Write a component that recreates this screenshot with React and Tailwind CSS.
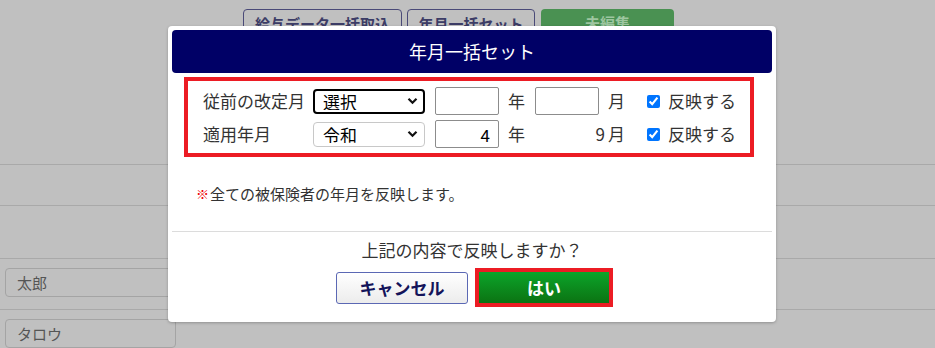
import { useState } from 'react'

function Chevron() {
    return (
        <svg
            className="pointer-events-none absolute right-[7px] top-1/2 -translate-y-1/2"
            width="11"
            height="8"
            viewBox="0 0 11 8"
        >
            <path d="M1.5 1.8 L5.5 5.8 L9.5 1.8" fill="none" stroke="#111" strokeWidth="2.2" />
        </svg>
    )
}

function EraSelect({ value, options, focused }) {
    return (
        <div className="relative w-[112px] h-[25px]">
            <select
                defaultValue={value}
                className={
                    focused
                        ? 'appearance-none w-full h-full pl-[8px] text-[17px] leading-none text-black bg-white border-2 border-black rounded-[4px] outline-none'
                        : 'appearance-none w-full h-full pl-[9px] text-[17px] leading-none text-black bg-white border border-[#c8c8c8] rounded-[4px] outline-none'
                }
            >
                {options.map((o) => (
                    <option key={o}>{o}</option>
                ))}
            </select>
            <Chevron />
        </div>
    )
}

function Row({ label, era, eraOptions, focused, year, monthCell, checked }) {
    const [on, setOn] = useState(checked)
    return (
        <div className="flex items-center h-[28px]">
            <span className="w-[110px] text-[17px] text-[#333]">{label}</span>
            <EraSelect value={era} options={eraOptions} focused={focused} />
            <input
                defaultValue={year}
                className="ml-[10px] w-[64px] h-[28px] border border-[#8c8c8c] rounded-[2px] text-right pr-[8px] text-[17px] text-black outline-none"
            />
            <span className="ml-[9px] w-[27px] text-[17px] text-[#333]">年</span>
            <div className="w-[90px] flex items-center justify-between text-[17px] text-[#333]">{monthCell}</div>
            <input
                type="checkbox"
                checked={on}
                onChange={() => setOn(!on)}
                className="ml-[22px] w-[13px] h-[13px] accent-[#0075ff]"
            />
            <span className="ml-[8px] text-[17px] text-[#333]">反映する</span>
        </div>
    )
}

export default function App() {
    return (
        <div className="relative w-[935px] h-[348px] overflow-hidden bg-[#c0c0c0] font-['Noto_Sans_CJK_JP',sans-serif]">
            {/* 背景のページ（オーバーレイで暗くなっている） */}
            <div className="h-[165px] border-b border-[#a9a9a9] flex gap-[5px] pl-[243px] pt-[9px]">
                <div className="w-[159px] h-[30px] border border-[#4a4a78] rounded-[4px] flex justify-center pt-[3px] text-[15px] font-bold text-[#3c3c66]">
                    給与データ一括取込
                </div>
                <div className="w-[128px] h-[30px] border border-[#4a4a78] rounded-[4px] flex justify-center pt-[3px] text-[15px] font-bold text-[#3c3c66]">
                    年月一括セット
                </div>
                <div className="ml-[1px] w-[133px] h-[30px] bg-[#4a9152] rounded-[4px] flex justify-center pt-[3px] text-[15px] font-bold text-[#9ec6a0]">
                    未編集
                </div>
            </div>
            <div className="h-[41px] border-b border-[#a9a9a9]" />
            <div className="h-[53px] border-b border-[#a9a9a9]" />
            <div className="h-[51px] border-b border-[#a9a9a9] pl-[5px] pt-[9px]">
                <div className="w-[171px] h-[29px] border border-[#a4a4a4] rounded-[4px] pl-[11px] text-[15px] leading-[27px] text-[#555]">
                    太郎
                </div>
            </div>
            <div className="pl-[5px] pt-[9px]">
                <div className="w-[171px] h-[29px] border border-[#a4a4a4] rounded-[4px] pl-[11px] text-[15px] leading-[27px] text-[#555]">
                    タロウ
                </div>
            </div>

            {/* ダイアログ */}
            <div className="absolute left-[168px] top-[26px] w-[608px] h-[296px] bg-white rounded-[4px] shadow-[0_1px_3px_rgba(0,0,0,0.25)] p-[4px] flex flex-col">
                <div className="h-[43px] bg-[#000066] rounded-[4px] flex items-center justify-center text-white text-[18px]">
                    年月一括セット
                </div>
                <div className="mt-[4px] ml-[12px] w-[570px] h-[80px] border-4 border-[#ec1c24] pl-[15px] pt-[6px] flex flex-col gap-[5px]">
                    <Row
                        label="従前の改定月"
                        era="選択"
                        eraOptions={['選択', '令和', '平成']}
                        focused
                        year=""
                        checked
                        monthCell={
                            <>
                                <input className="w-[64px] h-[28px] border border-[#8c8c8c] rounded-[2px] outline-none" />
                                <span>月</span>
                            </>
                        }
                    />
                    <Row
                        label="適用年月"
                        era="令和"
                        eraOptions={['令和', '平成']}
                        year="4"
                        checked
                        monthCell={
                            <span className="ml-auto">
                                9<span className="ml-[3px]">月</span>
                            </span>
                        }
                    />
                </div>
                <div className="mt-[26px] ml-[24px] h-[22px] flex items-center text-[15px] text-[#333]">
                    <span className="text-[#ee0000] text-[13px] font-bold mr-[1px]">※</span>
                    全ての被保険者の年月を反映します。
                </div>
                <div className="mt-[26px] border-t border-[#dcdcdc]" />
                <div className="mt-[6px] text-center text-[17px] text-[#333] leading-[24px]">
                    上記の内容で反映しますか？
                </div>
                <div className="mt-[6px] flex justify-center items-center gap-[7px] pl-[5px]">
                    <button className="w-[132px] h-[32px] bg-gradient-to-b from-white to-[#ececec] border border-[#5b68b4] rounded-[3px] text-[17px] font-bold text-[#14145a]">
                        キャンセル
                    </button>
                    <div className="border-4 border-[#ec1c24]">
                        <button className="w-[130px] h-[31px] bg-gradient-to-b from-[#0ba52a] to-[#0b7312] text-[17px] font-bold text-white">
                            はい
                        </button>
                    </div>
                </div>
            </div>
        </div>
    )
}
